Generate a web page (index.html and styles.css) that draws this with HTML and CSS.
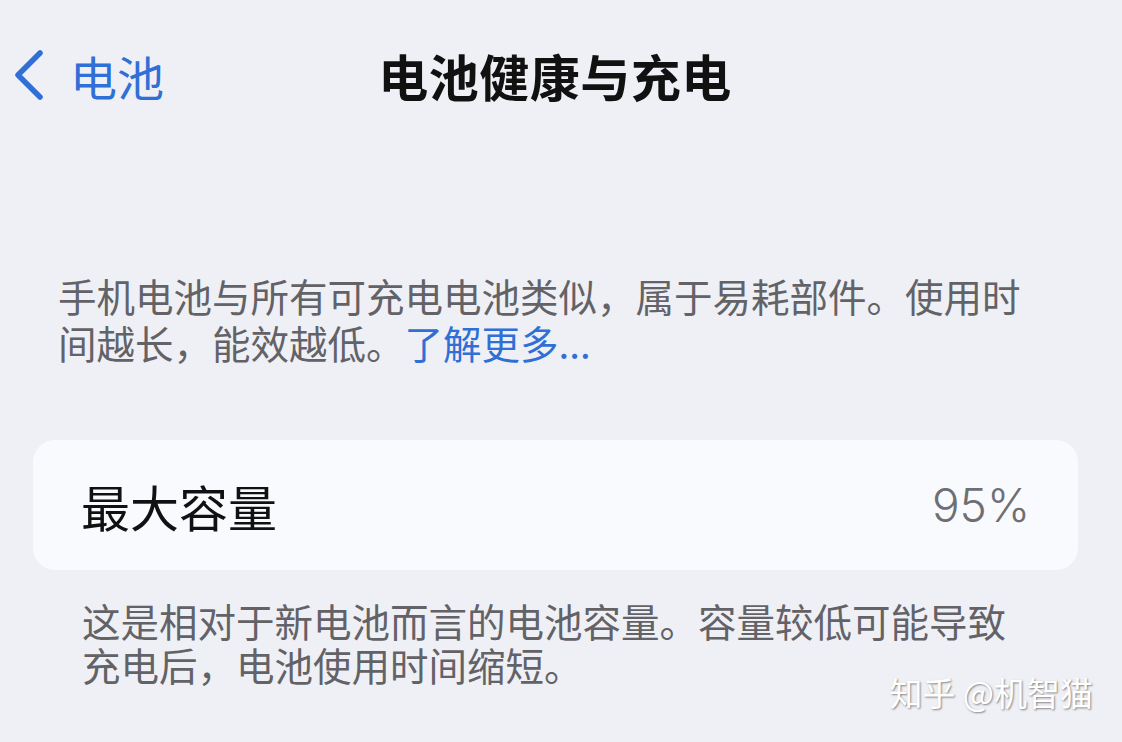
FILE: index.html
```html
<!DOCTYPE html>
<html lang="zh-CN">
<head>
    <meta charset="UTF-8">
    <meta name="viewport" content="width=device-width, initial-scale=1.0">
    <title>电池健康与充电</title>
    <link rel="stylesheet" href="styles.css">
</head>
<body>
    <div class="screen">
        <div class="nav">
            <a class="back" href="#">
                <svg class="chevron" viewBox="0 0 32 52" width="32" height="52">
                    <path d="M28 4 L6 26 L28 48" fill="none" stroke="#2f6fd6" stroke-width="5.5" stroke-linecap="round" stroke-linejoin="round"/>
                </svg>
                <span>电池</span>
            </a>
            <h1 class="title">电池健康与充电</h1>
            <div></div>
        </div>

        <p class="intro">
            手机电池与所有可充电电池类似，属于易耗部件。使用时间越长，能效越低。<a class="more" href="#">了解更多...</a>
        </p>

        <div class="card">
            <span class="label">最大容量</span>
            <span class="value">95%</span>
        </div>

        <p class="note">
            这是相对于新电池而言的电池容量。容量较低可能导致充电后，电池使用时间缩短。
        </p>

        <div class="watermark">知乎 @机智猫</div>
    </div>
</body>
</html>
```

FILE: styles.css
```css
body {
    margin: 0;
    background-color: #eff0f5;
    font-family: "Noto Sans CJK SC", "Noto Sans", sans-serif;
    overflow: hidden;
}
.screen {
    position: relative;
    width: 1122px;
    height: 742px;
}
.nav {
    display: grid;
    grid-template-columns: 1fr auto 1fr;
    align-items: center;
    height: 150px;
}
.back {
    display: flex;
    align-items: center;
    gap: 26px;
    padding-left: 12px;
    color: #2f6fd6;
    text-decoration: none;
    font-size: 47px;
}
.chevron {
    display: block;
}
.title {
    margin: 0;
    font-size: 50px;
    font-weight: 700;
    color: #111;
    letter-spacing: 0.5px;
    transform: translateX(-6px);
}
.intro {
    margin: 122px 0 0;
    padding-left: 58px;
    max-width: 975px;
    font-size: 38.5px;
    line-height: 47px;
    color: #626267;
}
.more {
    color: #2f6fd6;
    text-decoration: none;
}
.card {
    display: flex;
    justify-content: space-between;
    align-items: center;
    height: 130px;
    margin: 74px 44px 0 33px;
    padding: 0 48px 0 48px;
    background: #f9fafd;
    border-radius: 22px;
}
.label {
    font-size: 49px;
    color: #111;
}
.value {
    font-family: Inter, "Liberation Sans", sans-serif;
    font-weight: 300;
    font-size: 46px;
    color: #6e6e73;
}
.note {
    display: inline-block;
    margin: 28px 0 0;
    padding-left: 82px;
    max-width: 945px;
    font-size: 38.5px;
    line-height: 44px;
    color: #626267;
}
.watermark {
    position: absolute;
    right: 29px;
    bottom: 26px;
    font-size: 33px;
    color: #fff;
    text-shadow: 1px 1px 2px rgba(0, 0, 0, 0.45);
}
```
